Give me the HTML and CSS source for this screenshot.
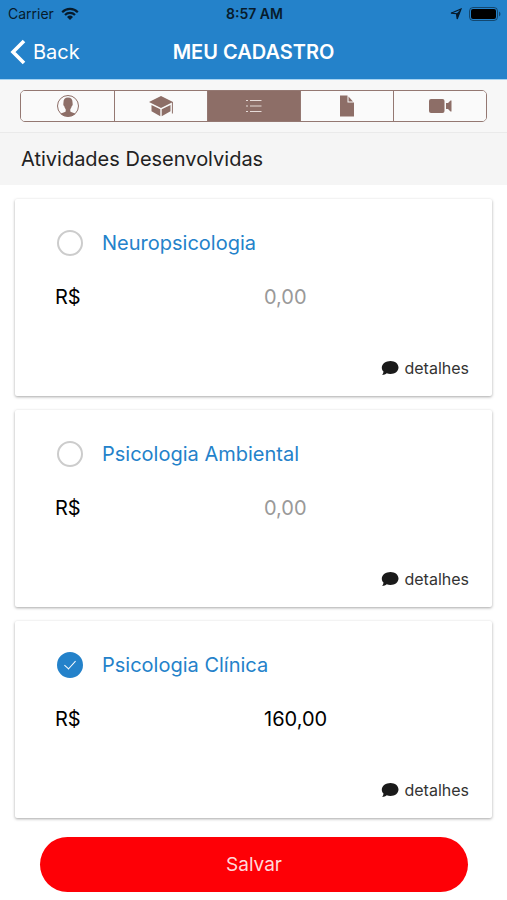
FILE: index.html
```html
<!DOCTYPE html>
<html lang="pt-BR">
<head>
<meta charset="utf-8">
<meta name="viewport" content="width=device-width, initial-scale=1">
<title>Meu Cadastro</title>
<link rel="stylesheet" href="styles.css">
</head>
<body>
<svg class="sprite" aria-hidden="true">
  <symbol id="comment" viewBox="0 0 18 16">
    <path d="M9.500 1C14 1 17.500 3.800 17.500 7.500S14 14 9.500 14c-1.400 0-2.700-.2-3.800-.8-1.200 1-2.700 1.600-4.500 1.700.8-1 1.300-2.100 1.300-3.300C1.300 10.500.8 9.100.8 7.500.8 3.800 5 1 9.500 1z"/>
  </symbol>
</svg>
<header class="topbar">
  <div class="status">
    <div class="status-side">
      <span>Carrier</span>
      <svg class="wifi" viewBox="0 0 18 13" aria-hidden="true">
        <path d="M1.200 5.200a11 11 0 0 1 15.600 0M4 8a7 7 0 0 1 10 0" fill="none" stroke="currentColor" stroke-width="2.200"/>
        <path d="M9 13 6 10a4.300 4.300 0 0 1 6 0z"/>
      </svg>
    </div>
    <span class="clock">8:57 AM</span>
    <div class="status-side status-right">
      <svg class="location" viewBox="0 0 12 12" aria-hidden="true">
        <path d="M11 1 7.200 11 6.500 5.700 1 5.200z" fill="none" stroke="currentColor" stroke-width="1.200"/>
        <path d="M11 1 7.200 11 6.500 5.700z"/>
      </svg>
      <svg class="battery" viewBox="0 0 32 14" aria-hidden="true">
        <rect x=".5" y=".5" width="28" height="13" rx="3.500" fill="none" stroke="currentColor" stroke-opacity=".45"/>
        <rect x="2" y="2" width="25" height="10" rx="2"/>
        <path d="M30 4.500q1.500.8 1.500 2.500T30 9.500z" fill-opacity=".45"/>
      </svg>
    </div>
  </div>
  <nav class="nav">
    <a class="back" href="#">
      <svg class="chevron" viewBox="0 0 16 26" aria-hidden="true"><path d="M14 2 3 13l11 11" fill="none" stroke="currentColor" stroke-width="3.600"/></svg>
      <span>Back</span>
    </a>
    <h1 class="title">MEU CADASTRO</h1>
  </nav>
</header>
<main>
  <div class="tabs">
    <div class="segments">
      <button class="segment" type="button" aria-label="Perfil">
        <svg class="icon" viewBox="0 0 24 24" aria-hidden="true">
          <circle cx="12" cy="12" r="10.500" fill="none" stroke="currentColor" stroke-width="1"/>
          <path d="M12 3.500c3 0 4.600 1.800 4.500 4.600l.2 2.200c0 1-.4 1.500-.9 1.700-.3 1.500-.8 2.400-1.500 3.200v2.300c1.800 1.200 4 1.200 5.200 2.400A10.500 10.500 0 0 1 12 22.500a10.500 10.500 0 0 1-7.500-2.600c1.200-1.200 3.400-1.200 5.200-2.400v-2.300c-.7-.8-1.200-1.700-1.500-3.200-.5-.2-.9-.7-.9-1.700l.2-2.200C7.400 5.300 9 3.500 12 3.500z"/>
        </svg>
      </button>
      <button class="segment" type="button" aria-label="Formação">
        <svg class="icon" viewBox="0 0 24 24" aria-hidden="true">
          <path d="M12 2 24 8 12 14 0 8z"/>
          <path d="M2.500 11 11.300 15.300V22.200L2.500 17.300zM12.700 15.300 21.500 11V17.300L12.700 22.200z"/>
          <path d="M23.400 8v11.500" fill="none" stroke="currentColor" stroke-width="1"/>
        </svg>
      </button>
      <button class="segment active" type="button" aria-label="Atividades">
        <svg class="icon" viewBox="0 0 24 24" aria-hidden="true">
          <path d="M8 6.500h11.500M8 12h11.500M8 17.500h11.500M4 6.500h2M4 12h2M4 17.500h2" fill="none" stroke="currentColor" stroke-width="1.200"/>
        </svg>
      </button>
      <button class="segment" type="button" aria-label="Documentos">
        <svg class="icon" viewBox="0 0 24 24" aria-hidden="true">
          <path d="M5 1.500h7.500V8.500H19V22.500H5zM13.500 2.500 18 7.500H13.500z"/>
        </svg>
      </button>
      <button class="segment" type="button" aria-label="Vídeo">
        <svg class="icon" viewBox="0 0 24 24" aria-hidden="true">
          <rect x="1" y="5" width="15.500" height="14" rx="2"/>
          <path d="M23.500 6.500v11h-1L20 15h-2V9h2l2.500-2.500z"/>
        </svg>
      </button>
    </div>
  </div>
  <h2 class="section">Atividades Desenvolvidas</h2>
  <form class="list">
    <section class="card">
      <label class="choice"><input class="check" type="checkbox"><span>Neuropsicologia</span></label>
      <div class="price"><label for="v1">R$</label><input class="value" id="v1" type="text" placeholder="0,00"></div>
      <div class="footer"><a class="details" href="#"><svg class="comment" aria-hidden="true"><use href="#comment"/></svg>detalhes</a></div>
    </section>
    <section class="card">
      <label class="choice"><input class="check" type="checkbox"><span>Psicologia Ambiental</span></label>
      <div class="price"><label for="v2">R$</label><input class="value" id="v2" type="text" placeholder="0,00"></div>
      <div class="footer"><a class="details" href="#"><svg class="comment" aria-hidden="true"><use href="#comment"/></svg>detalhes</a></div>
    </section>
    <section class="card">
      <label class="choice"><input class="check" type="checkbox" checked><span>Psicologia Clínica</span></label>
      <div class="price"><label for="v3">R$</label><input class="value" id="v3" type="text" value="160,00"></div>
      <div class="footer"><a class="details" href="#"><svg class="comment" aria-hidden="true"><use href="#comment"/></svg>detalhes</a></div>
    </section>
    <button class="save" type="button">Salvar</button>
  </form>
</main>
</body>
</html>
```
FILE: styles.css
```css
* { box-sizing: border-box; }
body {
  margin: 0;
  background: #fff;
  color: #000;
  font-family: Inter, "Liberation Sans", sans-serif;
  font-size: 20px;
}
svg { fill: currentColor; flex: none; }
button, input { font: inherit; }
a { color: inherit; text-decoration: none; }
.sprite { display: none; }

.topbar { background: #2482ca; border-bottom: 1px solid #a5d3f2; }
.status {
  display: grid;
  grid-template-columns: 1fr auto 1fr;
  align-items: center;
  height: 27px;
  padding: 0 6px 0 8px;
  font-size: 14px;
  color: #071b2c;
}
.status-side { display: flex; align-items: center; gap: 7px; }
.status-right { justify-content: flex-end; }
.clock { font-weight: 600; }
.wifi { width: 18px; height: 13px; }
.location { width: 12px; height: 12px; }
.battery { width: 32px; height: 14px; color: #000; }
.nav {
  display: grid;
  grid-template-columns: 1fr auto 1fr;
  align-items: center;
  height: 52px;
  padding: 0 10px 2px;
  color: #fff;
}
.back { display: flex; align-items: center; gap: 7px; }
.chevron { width: 16px; height: 26px; }
.title { margin: 0; font-size: 20px; font-weight: 600; }

.tabs { padding: 10px 20px; background: #f7f7f7; border-bottom: 1px solid #eaeaea; }
.segments {
  display: grid;
  grid-template-columns: repeat(5, 1fr);
  height: 32px;
  border: 1px solid #947872;
  border-radius: 5px;
  overflow: hidden;
}
.segment {
  display: flex;
  align-items: center;
  justify-content: center;
  padding: 0;
  border: 0;
  background: #fafafa;
  color: #8d6e67;
}
.segment + .segment { border-left: 1px solid #947872; }
.segment.active { background: #8d6e67; color: #e6dbd8; }
.icon { width: 24px; height: 24px; }

.section {
  margin: 0;
  padding: 0 21px;
  background: #f5f5f5;
  color: #222;
  font-size: 20px;
  font-weight: 400;
  line-height: 52px;
}
.list { display: flex; flex-direction: column; gap: 14px; padding: 14px 15px 8px; }
.card {
  padding-top: 17px;
  border-radius: 2px;
  background: #fff;
  box-shadow: 0 1px 3px rgba(0, 0, 0, .35);
}
.choice {
  display: flex;
  align-items: center;
  gap: 19px;
  height: 54px;
  padding-left: 42px;
  color: #2482ca;
}
.check {
  appearance: none;
  width: 26px;
  height: 26px;
  margin: 0;
  border: 2px solid #ccc;
  border-radius: 50%;
  background: #fff;
}
.check:checked { display: grid; place-items: center; border-color: #2482ca; background: #2482ca; }
.check:checked::before {
  content: "";
  width: 5px;
  height: 10px;
  margin-bottom: 3px;
  border: solid #fff;
  border-width: 0 1px 1px 0;
  transform: rotate(42deg);
}
.price {
  display: grid;
  grid-template-columns: 11fr 12fr;
  align-items: center;
  height: 54px;
  padding-left: 40px;
}
.value { width: 100%; padding: 0; border: 0; background: none; color: #000; outline: 0; }
.value::placeholder { color: #999; opacity: 1; }
.footer { display: flex; justify-content: flex-end; padding: 16px 23px 0; }
.details { display: flex; align-items: center; gap: 5px; height: 56px; color: #333; font-size: 16px; }
.comment { width: 18px; height: 16px; color: #1a1a1a; }
.save {
  height: 55px;
  margin: 5px 24px 0 25px;
  border: 0;
  border-radius: 28px;
  background: #fe0006;
  color: #ffd9da;
  font-size: 19px;
}
```
